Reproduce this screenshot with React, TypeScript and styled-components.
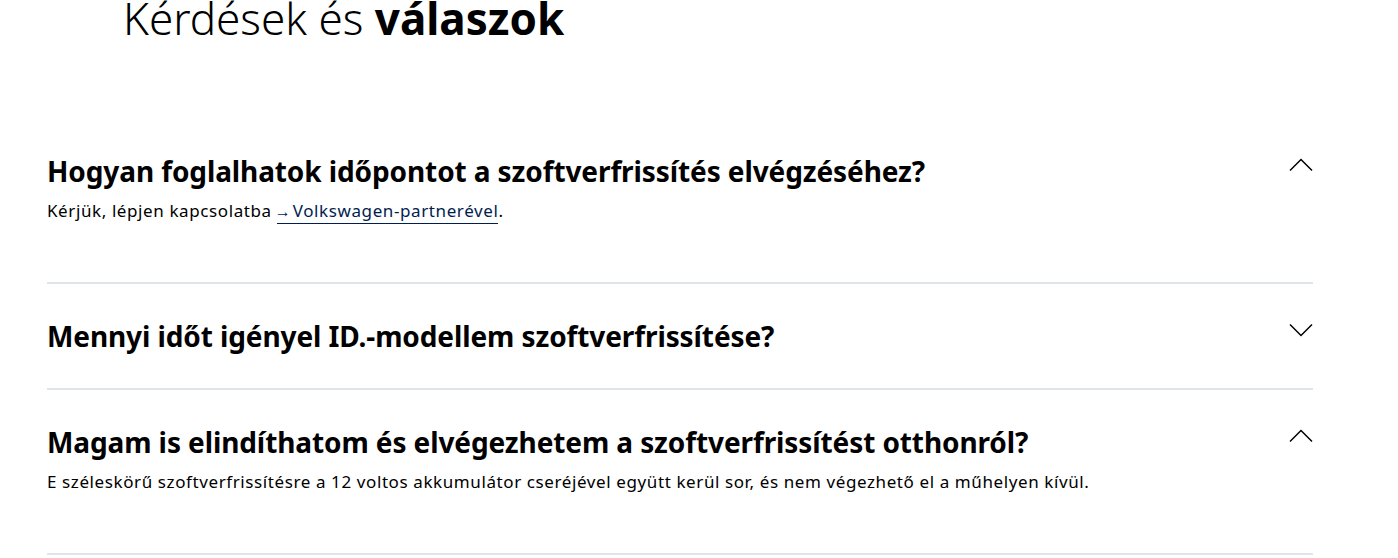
import { ReactElement } from "react";

import styled, { createGlobalStyle } from "styled-components";

const GlobalStyle = createGlobalStyle`
  html, body {
    margin: 0;
    padding: 0;
    background: #ffffff;
  }
  body {
    font-family: "Noto Sans", "Open Sans", sans-serif;
    color: #000000;
    overflow: hidden;
  }
`;

const Page = styled.main`
  width: 1266px;
  padding-left: 47px;
`;

const Title = styled.h2`
  margin: -7px 0 76px 76px;
  font-size: 44px;
  line-height: 50px;
  font-weight: 300;
  color: #000000;

  & strong {
    font-weight: 700;
  }
`;

const List = styled.div`
  display: flex;
  flex-direction: column;
`;

const Item = styled.section<{ $open: boolean }>`
  padding: 34px 0 ${(p) => (p.$open ? "59px" : "34px")};
  border-bottom: 2px solid #dfe4e8;
`;

const Header = styled.div`
  display: flex;
  flex-direction: row;
  justify-content: space-between;
  align-items: flex-start;
`;

const Question = styled.h3`
  margin: 0;
  font-size: 28px;
  line-height: 36px;
  font-weight: 700;
  letter-spacing: -0.1px;
`;

const Chevron = styled.svg`
  flex: none;
  margin-top: 5px;
  width: 24px;
  height: 14px;
`;

const Answer = styled.p`
  margin: 10px 0 0;
  font-size: 17px;
  line-height: 24px;
  letter-spacing: 0.6px;
`;

const PartnerLink = styled.a`
  color: #001e50;
  text-decoration: none;
  border-bottom: 1px solid #001e50;
  padding-bottom: 1px;
`;

const Arrow = styled.span`
  font-size: 16px;
  letter-spacing: 0;
  margin-right: 2px;
  margin-left: -2px;
`;

type Faq = {
  question: string;
  open: boolean;
  answer?: ReactElement;
};

const faqs: Faq[] = [
  {
    question: "Hogyan foglalhatok időpontot a szoftverfrissítés elvégzéséhez?",
    open: true,
    answer: (
      <>
        Kérjük, lépjen kapcsolatba{" "}
        <PartnerLink href="#">
          <Arrow>→</Arrow>Volkswagen-partnerével
        </PartnerLink>
        .
      </>
    ),
  },
  {
    question: "Mennyi időt igényel ID.-modellem szoftverfrissítése?",
    open: false,
  },
  {
    question:
      "Magam is elindíthatom és elvégezhetem a szoftverfrissítést otthonról?",
    open: true,
    answer: (
      <>
        E széleskörű szoftverfrissítésre a 12 voltos akkumulátor cseréjével
        együtt kerül sor, és nem végezhető el a műhelyen kívül.
      </>
    ),
  },
];

function ChevronIcon({ up }: { up: boolean }): ReactElement {
  return (
    <Chevron viewBox="0 0 24 14" fill="none">
      <polyline
        points={up ? "1,12.5 12,1.5 23,12.5" : "1,1.5 12,12.5 23,1.5"}
        stroke="#000000"
        strokeWidth="1.5"
      />
    </Chevron>
  );
}

export default function App(): ReactElement {
  return (
    <>
      <GlobalStyle />
      <Page>
        <Title>
          Kérdések és <strong>válaszok</strong>
        </Title>
        <List>
          {faqs.map((faq) => (
            <Item key={faq.question} $open={faq.open}>
              <Header>
                <Question>{faq.question}</Question>
                <ChevronIcon up={faq.open} />
              </Header>
              {faq.open && faq.answer && <Answer>{faq.answer}</Answer>}
            </Item>
          ))}
        </List>
      </Page>
    </>
  );
}
